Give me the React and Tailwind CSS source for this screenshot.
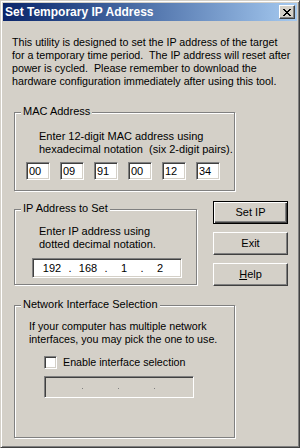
import React from "react";

const sunken =
  "border border-t-[#808080] border-l-[#808080] border-r-white border-b-white shadow-[inset_1px_1px_0_#404040,inset_-1px_-1px_0_#d4d0c8]";
const raised =
  "border border-t-white border-l-white border-r-[#404040] border-b-[#404040] shadow-[inset_-1px_-1px_0_#808080]";
const etched =
  "relative border border-[#808080] shadow-[inset_1px_1px_0_#fff,1px_1px_0_#fff]";

function CloseGlyph() {
  const rows = [
    [0, 1, 6, 7],
    [1, 2, 5, 6],
    [2, 3, 4, 5],
    [3, 4],
    [2, 3, 4, 5],
    [1, 2, 5, 6],
    [0, 1, 6, 7],
  ];
  return (
    <svg width="8" height="7" viewBox="0 0 8 7" shapeRendering="crispEdges">
      {rows.map((cols, y) =>
        cols.map((x) => <rect key={y + "-" + x} x={x} y={y} width="1" height="1" fill="#000" />)
      )}
    </svg>
  );
}

function GroupBox({ label, className, children }) {
  return (
    <div className={etched + " " + className}>
      <span className="absolute -top-[8px] left-[6px] px-[2px] bg-[#d4d0c8] leading-[13px] whitespace-nowrap">
        {label}
      </span>
      {children}
    </div>
  );
}

function IpField({ parts, disabled }) {
  return (
    <div
      className={
        sunken +
        " w-[150px] flex items-center pl-[2px] " +
        (disabled ? "h-[22px] bg-[#d4d0c8]" : "h-[20px] bg-white")
      }
    >
      {parts.map((p, i) => (
        <React.Fragment key={i}>
          {i > 0 && (
            <span className="w-[2px] flex justify-center">
              {disabled ? (
                <span className="block w-[1px] h-[1px] bg-[#808080] mt-[2px]" />
              ) : (
                <span>.</span>
              )}
            </span>
          )}
          <span className="w-[34px] text-center">{p}</span>
        </React.Fragment>
      ))}
    </div>
  );
}

function Button({ children, isDefault }) {
  return (
    <div
      className={
        "w-[75px] h-[23px] flex items-center justify-center bg-[#d4d0c8] " +
        (isDefault
          ? "border border-black shadow-[inset_1px_1px_0_#fff,inset_-1px_-1px_0_#404040,inset_-2px_-2px_0_#808080]"
          : raised)
      }
    >
      {children}
    </div>
  );
}

export default function App() {
  const mac = ["00", "09", "91", "00", "12", "34"];
  return (
    <div className="w-[300px] h-[448px] bg-[#d4d0c8] border border-t-[#d4d0c8] border-l-[#d4d0c8] border-r-[#404040] border-b-[#404040] shadow-[inset_1px_1px_0_#fff,inset_-1px_-1px_0_#808080] p-[2px] flex flex-col font-['Liberation_Sans',Arial,sans-serif] text-[11px] leading-[13px] text-black">
      <div className="h-[18px] shrink-0 flex items-center justify-between pl-[2px] pr-[2px] bg-linear-to-r from-[#0a246a] to-[#a6caf0]">
        <span className="text-white font-bold text-[12px] leading-[14px]">Set Temporary IP Address</span>
        <div className={raised + " w-[16px] h-[14px] bg-[#d4d0c8] flex items-center justify-center"}>
          <CloseGlyph />
        </div>
      </div>

      <div className="flex flex-col">
        <p className="ml-[9px] mt-[15px] whitespace-pre text-[10.7px]">
          This utility is designed to set the IP address of the target{"\n"}
          for a temporary time period.  The IP address will reset after{"\n"}
          power is cycled.  Please remember to download the{"\n"}
          hardware configuration immediately after using this tool.
        </p>

        <GroupBox label="MAC Address" className="ml-[11px] mt-[24px] w-[221px] h-[79px]">
          <p className="pl-[24px] pt-[17px] whitespace-pre">
            Enter 12-digit MAC address using{"\n"}
            hexadecimal notation  (six 2-digit pairs).
          </p>
          <div className="flex gap-[10px] pl-[11px] mt-[6px]">
            {mac.map((m, i) => (
              <div key={i} className={sunken + " w-[24px] h-[18px] bg-white pl-[2px] flex items-center"}>
                {m}
              </div>
            ))}
          </div>
        </GroupBox>

        <div className="flex items-start mt-[10px] ml-[11px]">
          <GroupBox label="IP Address to Set" className="mt-[8px] w-[183px] h-[76px]">
            <p className="pl-[24px] pt-[15px] whitespace-pre">
              Enter IP address using{"\n"}
              dotted decimal notation.
            </p>
            <div className="pl-[17px] mt-[7px]">
              <IpField parts={["192", "168", "1", "2"]} />
            </div>
          </GroupBox>
          <div className="ml-[16px] flex flex-col gap-[8px]">
            <Button isDefault>Set IP</Button>
            <Button>Exit</Button>
            <Button>
              <span>
                <span className="underline">H</span>elp
              </span>
            </Button>
          </div>
        </div>

        <GroupBox label="Network Interface Selection" className="ml-[11px] mt-[19px] w-[221px] h-[133px]">
          <p className="pl-[14px] pt-[14px] whitespace-pre text-[10.7px]">
            If your computer has multiple network{"\n"}
            interfaces, you may pick the one to use.
          </p>
          <div className="flex items-center pl-[29px] mt-[10px]">
            <div className={sunken + " w-[13px] h-[13px] bg-white"} />
            <span className="ml-[6px] text-[10.7px]">Enable interface selection</span>
          </div>
          <div className="pl-[29px] mt-[7px]">
            <IpField parts={["", "", "", ""]} disabled />
          </div>
        </GroupBox>
      </div>
    </div>
  );
}
